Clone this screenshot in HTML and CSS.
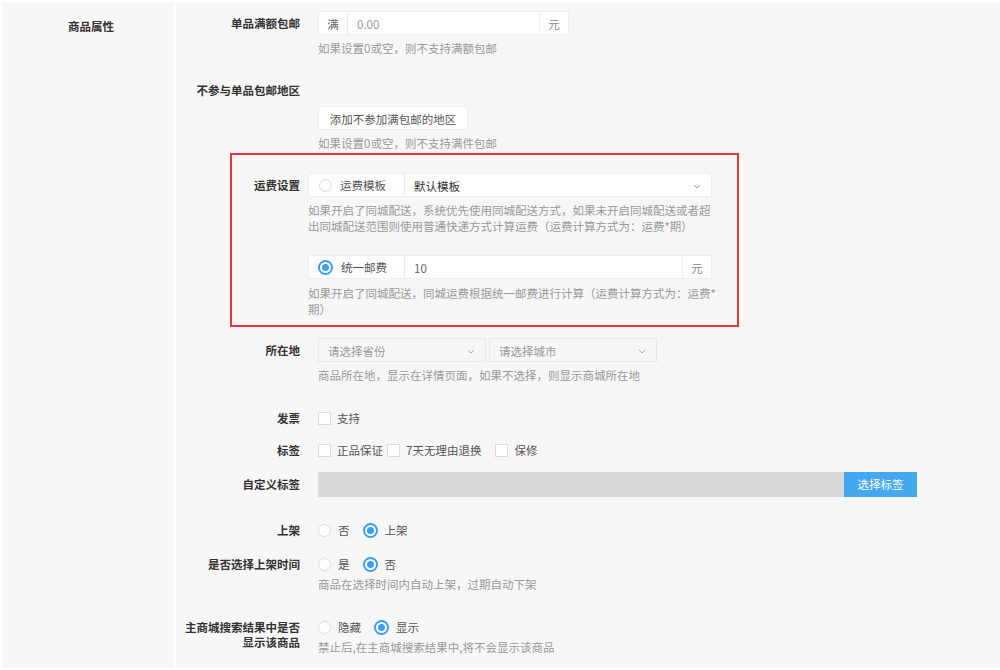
FILE: index.html
```html
<!doctype html>
<html>
<head>
<meta charset="utf-8">
<title>商品属性</title>
<link rel="stylesheet" href="styles.css">
</head>
<body>
<div class="page">
    <div class="side">
        <div class="side-title">商品属性</div>
    </div>

    <div class="main">
        <div class="row r-free">
            <div class="lbl">单品满额包邮</div>
            <div class="ctl">
                <div class="group w-free">
                    <span class="addon">满</span>
                    <span class="field muted">0.00</span>
                    <span class="addon unit">元</span>
                </div>
                <p class="help">如果设置0或空，则不支持满额包邮</p>
            </div>
        </div>

        <div class="row r-area">
            <div class="lbl">不参与单品包邮地区</div>
            <div class="ctl">
                <div class="btn">添加不参加满包邮的地区</div>
                <p class="help">如果设置0或空，则不支持满件包邮</p>
            </div>
        </div>

        <div class="box">
            <div class="row">
                <div class="lbl lbl-box">运费设置</div>
                <div class="ctl ctl-box">
                    <div class="group">
                        <span class="opt"><i class="radio"></i>运费模板</span>
                        <span class="field sel dark">默认模板
                            <svg class="chev" width="8" height="5" viewBox="0 0 8 5"><path d="M1 1l3 3 3-3" fill="none" stroke="#999" stroke-width="1"/></svg>
                        </span>
                    </div>
                    <p class="help">如果开启了同城配送，系统优先使用同城配送方式，如果未开启同城配送或者超出同城配送范围则使用普通快递方式计算运费（运费计算方式为：运费*期）</p>
                </div>
            </div>
            <div class="row r-unify">
                <div class="lbl lbl-box"></div>
                <div class="ctl ctl-box">
                    <div class="group">
                        <span class="opt"><i class="radio on"></i>统一邮费</span>
                        <span class="field">10</span>
                        <span class="addon unit">元</span>
                    </div>
                    <p class="help help-b">如果开启了同城配送，同城运费根据统一邮费进行计算（运费计算方式为：运费*期）</p>
                </div>
            </div>
        </div>

        <div class="row r-loc">
            <div class="lbl">所在地</div>
            <div class="ctl">
                <div class="selects">
                    <span class="select">请选择省份
                        <svg class="chev" width="8" height="5" viewBox="0 0 8 5"><path d="M1 1l3 3 3-3" fill="none" stroke="#aaa" stroke-width="1"/></svg>
                    </span>
                    <span class="select">请选择城市
                        <svg class="chev" width="8" height="5" viewBox="0 0 8 5"><path d="M1 1l3 3 3-3" fill="none" stroke="#aaa" stroke-width="1"/></svg>
                    </span>
                </div>
                <p class="help">商品所在地，显示在详情页面，如果不选择，则显示商城所在地</p>
            </div>
        </div>

        <div class="row r-invoice">
            <div class="lbl">发票</div>
            <div class="ctl checks">
                <span class="check"><i class="box-ck"></i>支持</span>
            </div>
        </div>

        <div class="row r-tags">
            <div class="lbl">标签</div>
            <div class="ctl checks">
                <span class="check c1"><i class="box-ck"></i>正品保证</span>
                <span class="check c2"><i class="box-ck"></i>7天无理由退换</span>
                <span class="check"><i class="box-ck"></i>保修</span>
            </div>
        </div>

        <div class="row r-custom">
            <div class="lbl">自定义标签</div>
            <div class="ctl custom">
                <span class="tagbar"></span>
                <span class="tagbtn">选择标签</span>
            </div>
        </div>

        <div class="row r-shelf">
            <div class="lbl">上架</div>
            <div class="ctl radios">
                <span class="ropt"><i class="radio"></i>否</span>
                <span class="ropt"><i class="radio on"></i>上架</span>
            </div>
        </div>

        <div class="row r-time">
            <div class="lbl">是否选择上架时间</div>
            <div class="ctl">
                <div class="radios">
                    <span class="ropt"><i class="radio"></i>是</span>
                    <span class="ropt"><i class="radio on"></i>否</span>
                </div>
                <p class="help help-tight">商品在选择时间内自动上架，过期自动下架</p>
            </div>
        </div>

        <div class="row r-search">
            <div class="lbl lbl-two">主商城搜索结果中是否<br>显示该商品</div>
            <div class="ctl">
                <div class="radios">
                    <span class="ropt"><i class="radio"></i>隐藏</span>
                    <span class="ropt"><i class="radio on"></i>显示</span>
                </div>
                <p class="help help-tight">禁止后,在主商城搜索结果中,将不会显示该商品</p>
            </div>
        </div>
    </div>
</div>
</body>
</html>
```

FILE: styles.css
```css
html, body{
    margin: 0;
    background-color: #fff;
}
body{
    font-family: "Noto Sans CJK SC", "Microsoft YaHei", sans-serif;
    font-size: 11.5px;
    color: #555;
    padding: 2px 0 0 2px;
    height: 668px;
    box-sizing: border-box;
    overflow: hidden;
}

.page{
    display: flex;
    gap: 2px;
    height: 100%;
}

.side{
    width: 172px;
    background-color: #f7f7f7;
    padding-top: 16px;
}
.side-title{
    padding-left: 66px;
    line-height: 16px;
    font-weight: 700;
    color: #333;
}

.main{
    flex: 1;
    background-color: #f7f7f7;
    padding-top: 9px;
}

.row{
    display: flex;
    align-items: flex-start;
    gap: 18px;
}
.lbl{
    width: 124px;
    flex: none;
    text-align: right;
    font-weight: 700;
    color: #333;
    line-height: 24px;
    white-space: nowrap;
}
.ctl{
    flex: none;
}
.help{
    margin: 5px 0 0 0;
    line-height: 16px;
    color: #999;
}
.help-tight{
    margin-top: 2px;
}

/* input groups */
.group{
    display: flex;
    height: 24px;
    line-height: 24px;
}
.group > span{
    background-color: #fff;
    border: 1px solid #efefef;
    box-sizing: border-box;
}
.group > span + span{
    border-left-color: #e9e9e9;
    margin-left: -1px;
}
.w-free{
    width: 251px;
}
.addon{
    width: 30px;
    flex: none;
    text-align: center;
    color: #666;
}
.unit{
    color: #888;
}
.field{
    flex: 1;
    padding-left: 9px;
    color: #666;
    position: relative;
}
.muted{
    color: #999;
}
.dark{
    color: #333;
}
.chev{
    position: absolute;
    right: 10px;
    top: 10px;
}

.btn{
    margin-top: 28px;
    width: 150px;
    height: 24px;
    line-height: 24px;
    text-align: center;
    background-color: #fff;
    border: 1px solid #efefef;
    box-sizing: border-box;
    color: #555;
}

.r-area{
    margin-top: 22px;
}

/* red box */
.box{
    margin: 2px 0 0 54px;
    width: 509px;
    box-sizing: border-box;
    border: 2px solid #e5383b;
    padding: 18px 25px 8px 0;
}
.box .row{
    gap: 8px;
}
.lbl-box{
    width: 68px;
}
.ctl-box{
    width: 404px;
}
.opt{
    width: 97px;
    flex: none;
    padding-left: 10px;
    display: flex;
    align-items: center;
    color: #555;
}
.opt .radio{
    margin-right: 8px;
}
.r-unify{
    margin-top: 21px;
}
.help-b{
    margin-top: 6px;
    margin-right: -9px;
}

/* radios and checks */
.radio{
    display: inline-block;
    width: 13px;
    height: 13px;
    border-radius: 50%;
    border: 1px solid #dcdcdc;
    background-color: #fff;
    box-sizing: border-box;
    position: relative;
}
.radio.on{
    border: 2px solid #3c9ef4;
    width: 15px;
    height: 15px;
    margin-left: -1px;
}
.radio.on::after{
    content: "";
    position: absolute;
    left: 2px;
    top: 2px;
    width: 7px;
    height: 7px;
    border-radius: 50%;
    background-color: #3c9ef4;
}

.radios{
    display: flex;
    align-items: center;
    height: 20px;
    line-height: 20px;
}
.ropt{
    display: flex;
    align-items: center;
    margin-right: 14px;
    color: #555;
}
.ropt .radio{
    margin-right: 7px;
}

.checks{
    display: flex;
    align-items: center;
    height: 24px;
}
.check{
    display: flex;
    align-items: center;
    color: #555;
}
.box-ck{
    display: inline-block;
    width: 13px;
    height: 13px;
    border: 1px solid #dcdcdc;
    background-color: #fff;
    box-sizing: border-box;
    margin-right: 6px;
}
.c1{
    margin-right: 4px;
}
.c2{
    margin-right: 14px;
}

/* location */
.r-loc{
    margin-top: 11px;
}
.selects{
    display: flex;
    gap: 3px;
}
.select{
    position: relative;
    width: 168px;
    height: 24px;
    line-height: 24px;
    box-sizing: border-box;
    border: 1px solid #e9e9e9;
    padding-left: 9px;
    color: #999;
}

.r-invoice{
    margin-top: 23px;
}
.r-tags{
    margin-top: 8px;
}

/* custom tag */
.r-custom{
    margin-top: 10px;
}
.r-custom .lbl{
    line-height: 25px;
}
.custom{
    display: flex;
    height: 25px;
}
.tagbar{
    width: 526px;
    background-color: #dadada;
}
.tagbtn{
    width: 73px;
    background-color: #44a7f0;
    color: #fff;
    text-align: center;
    line-height: 25px;
}

.r-shelf{
    margin-top: 23px;
}
.r-shelf .lbl,
.r-time .lbl{
    line-height: 20px;
}
.r-time{
    margin-top: 14px;
}
.r-search{
    margin-top: 25px;
}
.lbl-two{
    line-height: 15px;
    padding-top: 3px;
}
```
